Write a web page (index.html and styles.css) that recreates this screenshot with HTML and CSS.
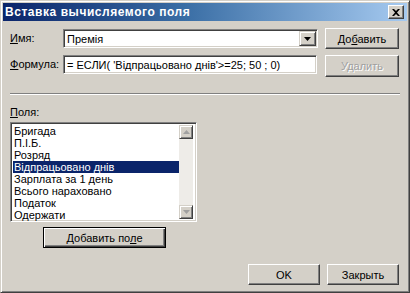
FILE: index.html
```html
<!DOCTYPE html>
<html lang="ru">
<head>
  <meta charset="UTF-8">
  <title>Вставка вычисляемого поля</title>
  <link rel="stylesheet" href="styles.css">
</head>
<body>

  <div class="window">
    <div class="titlebar">
      <span class="title">Вставка вычисляемого поля</span>
      <span class="close-btn">
        <svg width="8" height="7" viewBox="0 0 8 7"><path d="M0 0h2l2 2 2-2h2L5 3.5 8 7H6L4 5 2 7H0l3-3.5z" fill="#000"/></svg>
      </span>
    </div>

    <div class="content">
      <div class="form-grid">
        <label class="lbl"><u>И</u>мя:</label>
        <div class="field combo">
          <span class="field-text">Премія</span>
          <span class="drop-btn">
            <svg width="7" height="4" viewBox="0 0 7 4"><path d="M0 0h7L3.5 4z" fill="#000"/></svg>
          </span>
        </div>
        <button class="btn">До<u>б</u>авить</button>

        <label class="lbl lbl-formula"><u>Ф</u>ормула:</label>
        <div class="field input">
          <span class="field-text">= ЕСЛИ( 'Відпрацьовано днів'&gt;=25; 50 ; 0)</span>
        </div>
        <button class="btn btn-tall disabled">Удалить</button>
      </div>

      <div class="separator"></div>

      <div class="fields-label"><u>П</u>оля:</div>

      <div class="listbox">
        <ul class="items">
          <li>Бригада</li>
          <li>П.І.Б.</li>
          <li>Розряд</li>
          <li class="selected">Відпрацьовано днів</li>
          <li>Зарплата за 1 день</li>
          <li>Всього нараховано</li>
          <li>Податок</li>
          <li>Одержати</li>
        </ul>
        <div class="scrollbar">
          <span class="scroll-btn">
            <svg width="7" height="4" viewBox="0 0 7 4"><path d="M3.5 0L7 4H0z" fill="#a0a0a0"/></svg>
          </span>
          <span class="scroll-track"></span>
          <span class="scroll-btn">
            <svg width="7" height="4" viewBox="0 0 7 4"><path d="M0 0h7L3.5 4z" fill="#a0a0a0"/></svg>
          </span>
        </div>
      </div>

      <button class="btn btn-add default">Добавить по<u>л</u>е</button>

      <div class="footer">
        <button class="btn btn-footer">OK</button>
        <button class="btn btn-footer">Закрыть</button>
      </div>
    </div>
  </div>

</body>
</html>
```

FILE: styles.css
```css
* {
  box-sizing: border-box;
}

body {
  margin: 0;
  background: #d4d0c8;
  font-family: 'Liberation Sans', Arial, sans-serif;
  font-size: 11px;
  color: #000;
}

.window {
  width: 410px;
  height: 293px;
  background: #d4d0c8;
  border: 1px solid;
  border-color: #d4d0c8 #404040 #404040 #d4d0c8;
  box-shadow: inset 1px 1px 0 #fff, inset -1px -1px 0 #808080;
  padding: 2px;
  overflow: hidden;
}

.titlebar {
  height: 18px;
  background: linear-gradient(90deg, #0a246a 0%, #3a6ea5 45%, #a6caf0 100%);
  display: flex;
  align-items: center;
  justify-content: space-between;
  padding: 0 3px 0 2px;
}

.title {
  color: #fff;
  font-weight: bold;
  font-size: 12px;
  letter-spacing: 0.55px;
}

.close-btn {
  width: 16px;
  height: 14px;
  background: #d4d0c8;
  border: 1px solid;
  border-color: #fff #404040 #404040 #fff;
  box-shadow: inset -1px -1px 0 #808080;
  display: flex;
  align-items: center;
  justify-content: center;
}

.content {
  padding: 7px 8px 0 7px;
}

.form-grid {
  display: grid;
  grid-template-columns: 46px 255px 74px;
  grid-template-rows: 21px 22px;
  column-gap: 7px;
  row-gap: 6px;
  align-items: center;
}

.lbl {
  line-height: 13px;
}

.lbl-formula {
  align-self: start;
  padding-top: 3px;
}

.field {
  height: 19px;
  background: #fff;
  border: 1px solid;
  border-color: #808080 #fff #fff #808080;
  box-shadow: inset 1px 1px 0 #404040, inset -1px -1px 0 #d4d0c8;
  display: flex;
  align-items: center;
  padding: 0 2px 0 3px;
}

.input {
  align-self: start;
  width: 254px;
}

.field-text {
  flex: 1;
  white-space: nowrap;
  overflow: hidden;
}

.drop-btn {
  width: 17px;
  height: 15px;
  background: #d4d0c8;
  border: 1px solid;
  border-color: #d4d0c8 #404040 #404040 #d4d0c8;
  box-shadow: inset 1px 1px 0 #fff, inset -1px -1px 0 #808080;
  display: flex;
  align-items: center;
  justify-content: center;
  margin-right: -1px;
}

.btn {
  font-family: inherit;
  font-size: 11px;
  color: #000;
  background: #d4d0c8;
  border: 1px solid;
  border-color: #fff #404040 #404040 #fff;
  box-shadow: inset -1px -1px 0 #808080;
  height: 21px;
  padding: 0;
  cursor: default;
}

.btn-tall {
  height: 22px;
}

.btn.disabled {
  color: #a0a0a0;
  text-shadow: 1px 1px 0 #fff;
}

.btn.default {
  border-color: #000;
  box-shadow: inset 1px 1px 0 #fff, inset -1px -1px 0 #404040, inset -2px -2px 0 #808080;
}

.separator {
  margin-top: 16px;
  height: 2px;
  border-top: 1px solid #808080;
  border-bottom: 1px solid #fff;
  width: 390px;
}

.fields-label {
  margin-top: 11px;
  line-height: 13px;
}

.listbox {
  margin-top: 3px;
  width: 187px;
  height: 100px;
  background: #fff;
  border: 1px solid;
  border-color: #808080 #fff #fff #808080;
  box-shadow: inset 1px 1px 0 #404040, inset -1px -1px 0 #d4d0c8;
  padding: 2px;
  display: flex;
}

.items {
  list-style: none;
  margin: 0;
  padding: 0;
  flex: 1;
}

.items li {
  height: 12px;
  line-height: 12px;
  padding-left: 1px;
  white-space: nowrap;
}

.items li.selected {
  background: #0a246a;
  color: #fff;
}

.scrollbar {
  width: 14px;
  display: flex;
  flex-direction: column;
  margin-right: 1px;
}

.scroll-btn {
  height: 14px;
  background: #d4d0c8;
  border: 1px solid;
  border-color: #d4d0c8 #404040 #404040 #d4d0c8;
  box-shadow: inset 1px 1px 0 #fff, inset -1px -1px 0 #808080;
  display: flex;
  align-items: center;
  justify-content: center;
}

.scroll-track {
  flex: 1;
  background: #eeece8;
}

.btn-add {
  display: block;
  margin-top: 5px;
  margin-left: 33px;
  width: 123px;
}

.footer {
  display: flex;
  justify-content: flex-end;
  gap: 7px;
  margin-top: 16px;
}

.btn-footer {
  width: 72px;
}
```
